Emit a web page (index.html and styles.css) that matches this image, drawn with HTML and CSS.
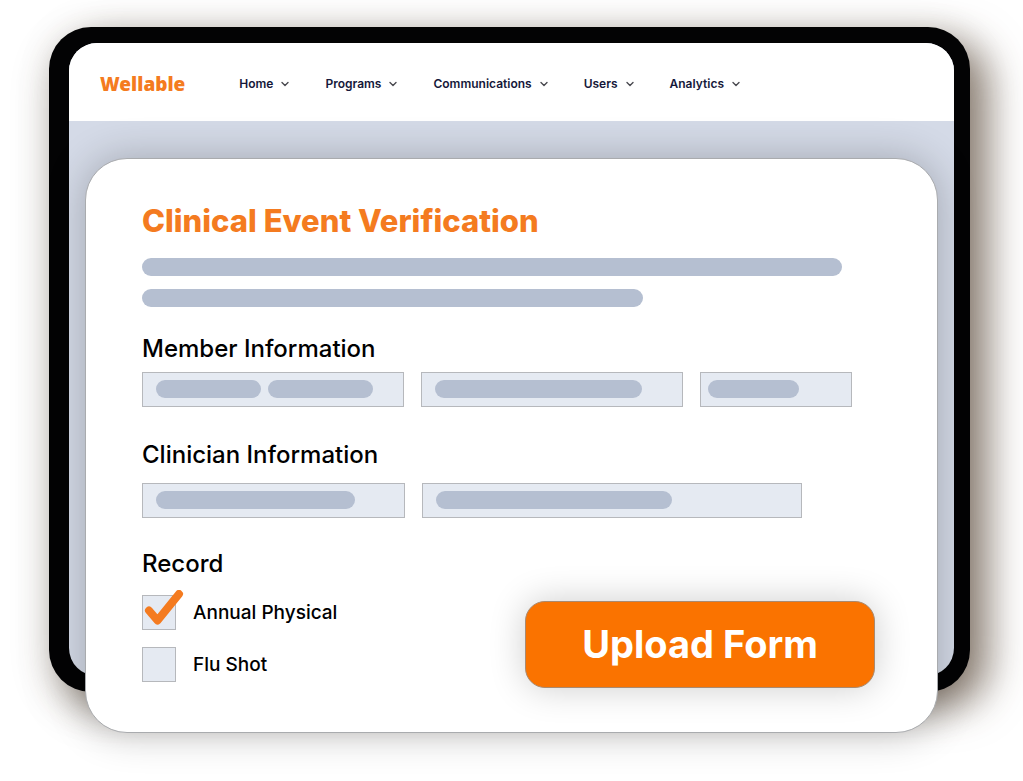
FILE: index.html
```html
<!DOCTYPE html>
<html lang="en">
<head>
<meta charset="utf-8">
<meta name="viewport" content="width=device-width, initial-scale=1">
<title>Clinical Event Verification</title>
<link rel="stylesheet" href="styles.css">
</head>
<body>
<div class="stage">
  <div class="tablet">
    <div class="screen">
      <header class="topbar">
        <a class="brand" href="#">Wellable</a>
        <nav class="menu" aria-label="Main">
          <a class="menu-item" href="#">Home<svg class="chevron" viewBox="0 0 8 6" aria-hidden="true"><path d="M1 1.5 4 4.5 7 1.5"/></svg></a>
          <a class="menu-item" href="#">Programs<svg class="chevron" viewBox="0 0 8 6" aria-hidden="true"><path d="M1 1.5 4 4.5 7 1.5"/></svg></a>
          <a class="menu-item" href="#">Communications<svg class="chevron" viewBox="0 0 8 6" aria-hidden="true"><path d="M1 1.5 4 4.5 7 1.5"/></svg></a>
          <a class="menu-item" href="#">Users<svg class="chevron" viewBox="0 0 8 6" aria-hidden="true"><path d="M1 1.5 4 4.5 7 1.5"/></svg></a>
          <a class="menu-item" href="#">Analytics<svg class="chevron" viewBox="0 0 8 6" aria-hidden="true"><path d="M1 1.5 4 4.5 7 1.5"/></svg></a>
        </nav>
      </header>
    </div>
  </div>

  <form class="card">
    <h1 class="title">Clinical Event Verification</h1>
    <div class="intro">
      <div class="bar intro-long"></div>
      <div class="bar intro-short"></div>
    </div>

    <section class="group member">
      <h2 class="group-title">Member Information</h2>
      <div class="fields member-fields">
        <div class="field">
          <input class="field-input" type="text" aria-label="Member name">
          <div class="bars"><span class="bar bar-name"></span><span class="bar bar-name"></span></div>
        </div>
        <div class="field">
          <input class="field-input" type="text" aria-label="Member email">
          <div class="bars"><span class="bar bar-email"></span></div>
        </div>
        <div class="field">
          <input class="field-input" type="text" aria-label="Member ID">
          <div class="bars bars-tight"><span class="bar bar-id"></span></div>
        </div>
      </div>
    </section>

    <section class="group clinician">
      <h2 class="group-title">Clinician Information</h2>
      <div class="fields clinician-fields">
        <div class="field">
          <input class="field-input" type="text" aria-label="Clinician name">
          <div class="bars"><span class="bar bar-clinician"></span></div>
        </div>
        <div class="field">
          <input class="field-input" type="text" aria-label="Clinician address">
          <div class="bars"><span class="bar bar-address"></span></div>
        </div>
      </div>
    </section>

    <div class="footer">
      <section class="record">
        <h2 class="group-title">Record</h2>
        <div class="options">
          <label class="option">
            <span class="tick-box">
              <input class="tick" type="checkbox" checked>
              <svg class="tick-mark" viewBox="0 0 42 40" aria-hidden="true"><path d="M7 20.5 15.5 30.5 37 4"/></svg>
            </span>
            Annual Physical
          </label>
          <label class="option">
            <span class="tick-box">
              <input class="tick" type="checkbox">
              <svg class="tick-mark" viewBox="0 0 42 40" aria-hidden="true"><path d="M7 20.5 15.5 30.5 37 4"/></svg>
            </span>
            Flu Shot
          </label>
        </div>
      </section>
      <button class="upload" type="button">Upload Form</button>
    </div>
  </form>
</div>
</body>
</html>
```
FILE: styles.css
```css
* { box-sizing: border-box; }

body {
  margin: 0;
  background: #fff;
  color: #000;
  font-family: Inter, "Liberation Sans", sans-serif;
}

/* The card shares the tablet's grid cell and hangs over its lower edge. */
.stage {
  display: grid;
  padding: 27px 53px 49px 49px;
  overflow: hidden;
}

.tablet {
  grid-area: 1 / 1;
  margin-bottom: 41px;
  padding: 16px 16px 16px 20px;
  display: flex;
  background: #030304;
  border-radius: 42px;
  box-shadow:
    18px 14px 40px rgba(72, 52, 34, 0.6),
    0 12px 40px rgba(60, 50, 36, 0.2);
}

.screen {
  flex: 1;
  background: #d4dae7;
  border-radius: 28px;
  overflow: hidden;
}

.topbar {
  display: flex;
  align-items: center;
  gap: 54px;
  height: 78px;
  padding: 4px 31px 0;
  background: #fff;
}

.brand {
  color: #f47b20;
  font: 900 19px/24px "Noto Sans", sans-serif;
  text-decoration: none;
}

.menu {
  display: flex;
  gap: 36px;
}

.menu-item {
  display: flex;
  align-items: center;
  gap: 8px;
  color: #15183a;
  font-size: 12px;
  font-weight: 600;
  line-height: 16px;
  text-decoration: none;
}

.chevron {
  width: 8px;
  height: 6px;
  fill: none;
  stroke: #4a4a50;
  stroke-width: 1.4;
  stroke-linecap: round;
  stroke-linejoin: round;
}

.card {
  grid-area: 1 / 1;
  position: relative;
  margin: 131px 32px 0 36px;
  padding: 42px 62px 44px 56px;
  background: #fff;
  border: 1px solid #a9abae;
  border-radius: 42px;
  box-shadow: 0 0 40px rgba(0, 0, 0, 0.24);
}

.title {
  margin: 0;
  color: #f47b20;
  font-size: 31px;
  font-weight: 800;
  line-height: 40px;
}

.bar {
  display: block;
  height: 18px;
  border-radius: 9px;
  background: #b5bfd1;
}

.intro {
  display: grid;
  gap: 13px;
  margin-top: 17px;
}

.intro-long { max-width: 700px; }
.intro-short { max-width: 501px; }

.member { margin-top: 26px; }
.clinician { margin-top: 32px; }

.group-title {
  margin: 0;
  font-size: 24px;
  font-weight: 500;
  line-height: 32px;
}

.fields {
  display: grid;
  gap: 17px;
}

.member-fields {
  grid-template-columns: 263fr 263fr 152fr;
  max-width: 710px;
  margin-top: 7px;
}

.clinician-fields {
  grid-template-columns: 263fr 380fr;
  max-width: 660px;
  margin-top: 12px;
}

.field {
  display: grid;
  align-items: center;
}

.field-input {
  grid-area: 1 / 1;
  width: 100%;
  height: 35px;
  padding: 0 14px;
  border: 1px solid #b6b8bc;
  border-radius: 0;
  background: #e5eaf2;
}

.bars {
  grid-area: 1 / 1;
  position: relative;
  display: flex;
  gap: 7px;
  padding: 0 14px 1px;
  pointer-events: none;
}

.bars-tight { padding: 0 8px 1px; }

.bar-name { width: 105px; }
.bar-email { width: 207px; }
.bar-id { width: 91px; }
.bar-clinician { width: 199px; }
.bar-address { width: 236px; }

.footer {
  display: flex;
  align-items: flex-end;
  justify-content: space-between;
  margin-top: 30px;
}

.record { padding-bottom: 6px; }

.options {
  display: grid;
  gap: 17px;
  margin-top: 15px;
}

.option {
  display: flex;
  align-items: center;
  gap: 17px;
  font-size: 19px;
  font-weight: 500;
  line-height: 24px;
}

.tick-box {
  position: relative;
  display: flex;
}

.tick {
  appearance: none;
  width: 34px;
  height: 35px;
  margin: 0;
  border: 1px solid #b6b8bc;
  background: #e5eaf2;
}

.tick-mark {
  position: absolute;
  left: 0;
  bottom: 0;
  width: 42px;
  height: 40px;
  fill: none;
  stroke: #f47b20;
  stroke-width: 8;
  stroke-linecap: round;
  stroke-linejoin: round;
  visibility: hidden;
  pointer-events: none;
}

.tick:checked + .tick-mark { visibility: visible; }

.upload {
  padding: 18px 56px;
  border: 1px solid #a98a70;
  border-radius: 20px;
  background: #fa7300;
  box-shadow: 0 0 36px rgba(0, 0, 0, 0.2);
  color: #fff;
  font: 700 38px/49px Inter, "Liberation Sans", sans-serif;
}
```
